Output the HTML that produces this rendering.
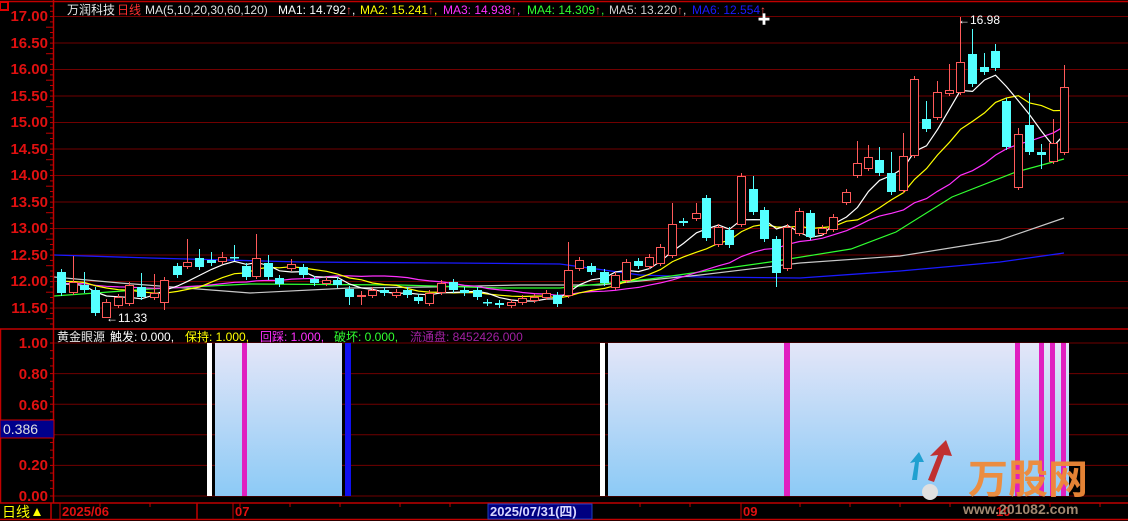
<!DOCTYPE html>
<html><head><meta charset="utf-8"><style>
html,body{margin:0;padding:0;background:#000;width:1128px;height:521px;overflow:hidden}
svg{display:block}
text{font-family:"Liberation Sans","Noto Sans CJK SC",sans-serif}
</style></head><body>
<svg id="s" width="1128" height="521" viewBox="0 0 1128 521" xmlns="http://www.w3.org/2000/svg">
<defs><linearGradient id="g" x1="0" y1="0" x2="0" y2="1"><stop offset="0" stop-color="#e4e6f8"/><stop offset="1" stop-color="#8ccaf6"/></linearGradient></defs>
<rect width="1128" height="521" fill="#000"/>
<g id="grid"></g>
<!-- indicator panel -->
<rect x="215" y="343" width="127" height="153" fill="url(#g)"/>
<rect x="608" y="343" width="461" height="153" fill="url(#g)"/>
<rect x="207" y="343" width="5" height="153" fill="#fff"/>
<rect x="600" y="343" width="5" height="153" fill="#fff"/>
<rect x="345" y="343" width="6" height="153" fill="#1010f0"/>
<g fill="#e020c0">
<rect x="242" y="343" width="5" height="153"/><rect x="784" y="343" width="6" height="153"/>
<rect x="1015" y="343" width="5" height="153"/><rect x="1039" y="343" width="5" height="153"/>
<rect x="1050" y="343" width="5" height="153"/><rect x="1061" y="343" width="5" height="153"/>
</g>
<g id="mas"></g>
<g id="candles"></g>
<!-- frame -->
<g stroke="#c00000" stroke-width="1.5" fill="none">
<line x1="0" y1="1.5" x2="1128" y2="1.5"/>
<line x1="0" y1="329" x2="1128" y2="329"/>
<line x1="53.5" y1="0" x2="53.5" y2="503"/>
<line x1="0" y1="503" x2="1128" y2="503"/>
<line x1="0" y1="519.5" x2="1128" y2="519.5"/>
<line x1="0.5" y1="329" x2="0.5" y2="503"/>
<line x1="51" y1="503" x2="51" y2="520"/>
<line x1="197" y1="503" x2="197" y2="520"/>
</g>
<g id="ticks" stroke="#c00000"></g>
<rect x="0" y="2" width="8" height="8" fill="none" stroke="#e00000" stroke-width="2"/>
<g font-size="15" fill="#e01010" text-anchor="end" font-weight="bold">
<text x="48" y="21">17.00</text><text x="48" y="48">16.50</text><text x="48" y="74">16.00</text>
<text x="48" y="101">15.50</text><text x="48" y="127">15.00</text><text x="48" y="154">14.50</text>
<text x="48" y="180">14.00</text><text x="48" y="207">13.50</text><text x="48" y="233">13.00</text>
<text x="48" y="260">12.50</text><text x="48" y="286">12.00</text><text x="48" y="313">11.50</text>
<text x="48" y="348">1.00</text><text x="48" y="379">0.80</text><text x="48" y="410">0.60</text>
<text x="48" y="470">0.20</text><text x="48" y="501">0.00</text>
</g>
<rect x="0" y="420" width="54" height="18" fill="#00008c" stroke="#d00000"/>
<text x="3" y="434" font-size="14" fill="#e0e0e0">0.386</text>
<!-- header -->
<g font-size="12">
<text x="67" y="14" fill="#e8e8e8">万润科技</text><text x="117" y="14" fill="#ff3030">日线</text>
<text x="145" y="14" fill="#e0e0e0">MA(5,10,20,30,60,120)</text>
<text x="278" y="14" fill="#fff">MA1: 14.792<tspan fill="#ff5050">↑</tspan>,</text>
<text x="360" y="14" fill="#ffff00">MA2: 15.241<tspan fill="#ff5050">↑</tspan>,</text>
<text x="443" y="14" fill="#ff30ff">MA3: 14.938<tspan fill="#ff5050">↑</tspan>,</text>
<text x="527" y="14" fill="#30ff30">MA4: 14.309<tspan fill="#ff5050">↑</tspan>,</text>
<text x="609" y="14" fill="#d0d0d0">MA5: 13.220<tspan fill="#ff5050">↑</tspan>,</text>
<text x="692" y="14" fill="#1a1aff">MA6: 12.554<tspan fill="#ff5050">↑</tspan></text>
<text x="57" y="341" fill="#e8e8e8">黄金眼源</text>
<text x="110" y="341" fill="#fff">触发: 0.000,</text>
<text x="185" y="341" fill="#ffff00">保持: 1.000,</text>
<text x="260" y="341" fill="#ff30ff">回踩: 1.000,</text>
<text x="334" y="341" fill="#30ff30">破坏: 0.000,</text>
<text x="410" y="341" fill="#a020a0">流通盘: 8452426.000</text>
<text x="106" y="322" fill="#fff">←11.33</text>
<text x="958" y="24" fill="#fff">←16.98</text>
</g>
<text x="764" y="24" font-size="13" fill="#fff" text-anchor="middle">✚</text>
<!-- bottom axis -->
<text x="2" y="517" font-size="14" fill="#ffff00">日线</text>
<polygon points="33,516 37,508 41,516" fill="#ffff00"/>
<g font-size="13" fill="#e01010" font-weight="bold">
<text x="62" y="516">2025/06</text><text x="235" y="516">07</text><text x="743" y="516">09</text><text x="996" y="516">10</text>
</g>
<rect x="488" y="504" width="104" height="15" fill="#000080" stroke="#2040c0"/>
<text x="490" y="516" font-size="13" font-weight="bold" fill="#d8d8ff">2025/07/31(四)</text>
<!-- logo -->
<polygon points="928,480 938,455 930,456 946,440 952,456 944,455 934,482" fill="#c03030"/>
<polygon points="912,480 915,462 910,463 919,452 924,462 919,462 917,480" fill="#20a0d0"/>
<circle cx="930" cy="492" r="8" fill="#e0e0e0"/>
<text x="968" y="493" font-size="40" font-weight="bold" fill="#f08a38" opacity="0.95">万股网</text>
<text x="963" y="514" font-size="14" font-weight="bold" fill="#a08870">www.201082.com</text>
</svg>
<script>
var NS="http://www.w3.org/2000/svg";
function el(p,t,a){var e=document.createElementNS(NS,t);for(var k in a)e.setAttribute(k,a[k]);p.appendChild(e);return e;}
var grid=document.getElementById("grid");
[16.5,43,69.5,96,122.5,149,175.5,202,228.5,255,281.5,308,343,373.6,404.2,434.8,465.4,496].forEach(function(y){el(grid,"line",{x1:54,x2:1128,y1:y,y2:y,stroke:"#700000","stroke-width":1});});
var tk=document.getElementById("ticks");
for(var y=6;y<328;y+=5.3){el(tk,"line",{x1:y%26.5<1?46:50,x2:53,y1:y,y2:y});}
for(var y=343;y<500;y+=7.65){el(tk,"line",{x1:50,x2:53,y1:y,y2:y});}
[100,150,240,290,340,400,450,540,590,640,690,800,850,900,950,1050,1100].forEach(function(x){el(tk,"line",{x1:x,x2:x,y1:503,y2:507});});
el(tk,"line",{x1:60,x2:60,y1:503,y2:519});el(tk,"line",{x1:233,x2:233,y1:503,y2:519});el(tk,"line",{x1:741,x2:741,y1:503,y2:519});
// x, up, bodyTop, bodyBot, hi, lo
var D=[[61,0,272,293],[73,1,282,292,256],[84,0,285,290,272],[95,0,290,313],[106,1,302,317,0,317],[118,1,297,305],[129,1,285,303],[141,0,287,297,273],[154,1,293,297,274],[164,1,280,302,0,310],[177,0,266,275],[187,1,262,266,239],[199,0,258,267,249],[211,0,260,263,252],[222,1,257,261,252],[234,0,257,258,245],[246,0,266,277],[256,1,258,276,234],[268,0,263,277,255],[279,0,278,284],[291,1,264,268,259],[303,0,267,275],[314,0,279,283],[326,1,280,283],[337,0,280,285],[349,0,289,297,0,305],[361,1,295,296,291,305],[372,1,290,295],[384,0,290,293],[396,1,292,295],[407,0,290,295],[418,0,297,301],[429,1,293,303],[441,1,283,292],[453,0,282,290],[464,0,290,293],[477,0,290,297],[487,0,302,303],[499,0,303,305],[511,1,302,305],[522,1,298,302],[534,1,297,300],[546,1,293,297],[557,0,295,304],[568,1,270,295,242],[579,1,260,268],[591,0,266,272],[604,0,272,283],[615,1,275,287],[626,1,262,280],[638,0,261,266],[649,1,257,266],[660,1,247,263],[672,1,224,255,203],[683,0,221,223],[696,1,213,218,203],[706,0,198,238,195],[718,1,227,244],[729,0,230,245],[741,1,176,224],[753,0,189,212,176],[764,0,210,239],[776,0,239,273,0,287],[787,1,227,268],[799,1,211,233],[810,0,213,237],[822,1,228,233],[833,1,217,229],[846,1,192,202],[857,1,163,175,141],[868,1,157,168,145],[879,0,160,173,147],[891,0,173,192,152],[903,1,156,190,133],[914,1,79,155],[926,0,119,129,101],[937,1,92,117,81],[949,1,90,93,64],[960,1,62,92,17],[972,0,54,84,29],[984,0,67,72,53],[995,0,51,68,44],[1006,0,101,147],[1018,1,134,187,128],[1029,0,125,152,93],[1041,0,152,155,144,169],[1053,1,143,161,119],[1064,1,87,152,65]];
var cg=document.getElementById("candles"),closes=[],xs=[];
D.forEach(function(d){var x=d[0],up=d[1],t=d[2],b=d[3],h=d[4]||t-3,l=d[5]||b+3;
var col=up?"#ff5a5a":"#54ffff";
el(cg,"line",{x1:x+0.5,x2:x+0.5,y1:h,y2:l,stroke:col});
if(up)el(cg,"rect",{x:x-3.5,y:t+0.5,width:8,height:Math.max(b-t,1),fill:"#000",stroke:col});
else el(cg,"rect",{x:x-4,y:t,width:9,height:Math.max(b-t,1.5),fill:col});
closes.push(up?t:b);xs.push(x+0.5);});
function ma(n,c,pad){var pts=[];for(var i=0;i<closes.length;i++){var s=0;for(var j=i-n+1;j<=i;j++)s+=(j<0?pad:closes[j]);pts.push(xs[i]+","+(s/n).toFixed(1));}
el(document.getElementById("mas"),"polyline",{points:pts.join(" "),fill:"none",stroke:c,"stroke-width":1.2});}
var m=document.getElementById("mas");
el(m,"polyline",{points:"54,255 150,258 300,262 450,263 560,264 640,275 700,277 800,278 900,271 1000,262 1064,253",fill:"none",stroke:"#1a1aff","stroke-width":1.3});
el(m,"polyline",{points:"54,277 120,283 250,293 350,288 430,287 520,285 600,285 700,275 800,263 900,256 1000,240 1064,218",fill:"none",stroke:"#c8c8c8","stroke-width":1.2});
el(m,"polyline",{points:"54,296 150,289 250,284 400,285 500,288 560,288 650,279 770,262 851,249 896,232 952,197 1016,172 1064,159",fill:"none",stroke:"#30ff30","stroke-width":1.2});
ma(20,"#ff30ff",283);ma(10,"#ffff00",280);ma(5,"#ffffff",282);
</script>
</body></html>
